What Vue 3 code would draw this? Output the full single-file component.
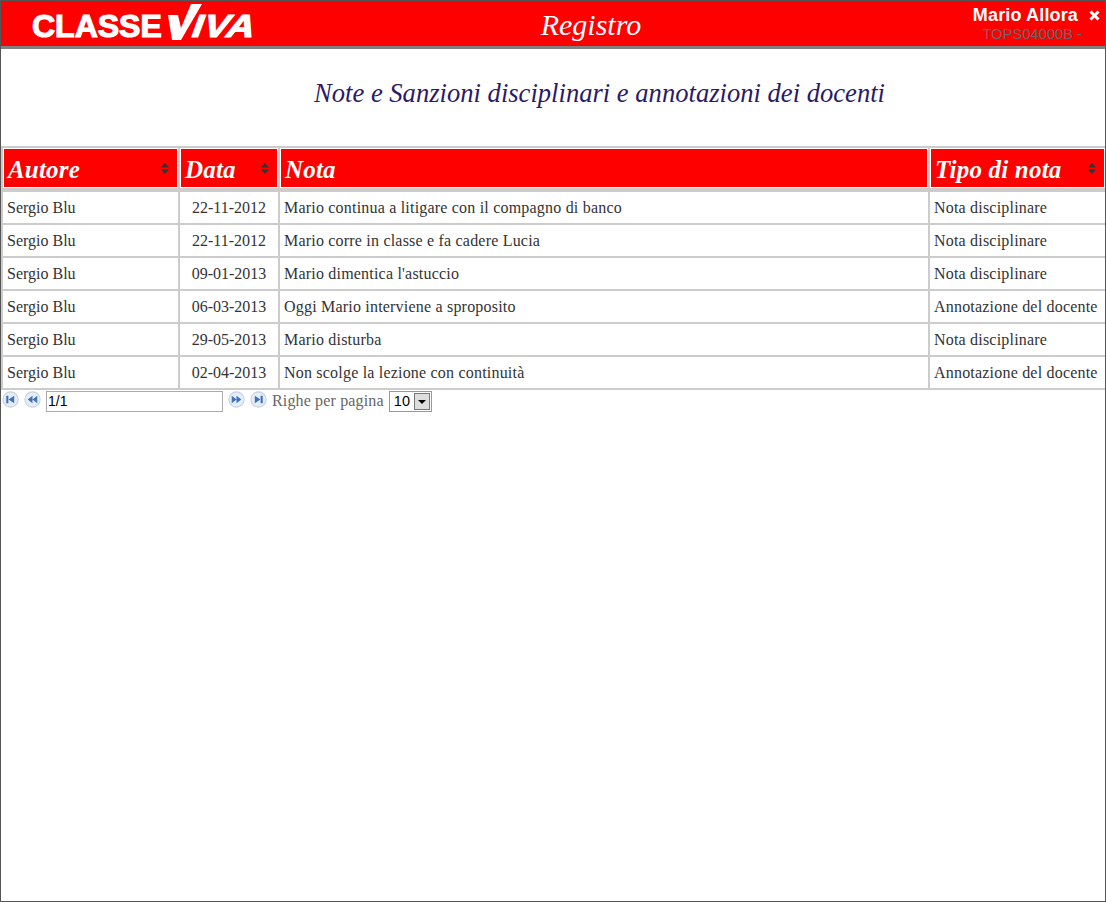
<template>
  <div class="page">
    <header class="topbar">
      <div class="logo">
        <span class="logo-text">CLASSE</span>
        <svg class="logo-v" width="40" height="36" viewBox="0 0 40 36">
          <path d="M6 11 H16 L19 24 L29 0 H40 L19 36 H10 Z" fill="#fff" />
        </svg>
        <span class="logo-text logo-iva">IVA</span>
      </div>
      <div class="title">Registro</div>
      <div class="user">
        <div class="user-name">
          <span>Mario Allora</span>
          <svg class="close" width="11" height="11" viewBox="0 0 11 11">
            <path d="M1.5 1.5 L9.5 9.5 M9.5 1.5 L1.5 9.5" stroke="#fff" stroke-width="3" />
          </svg>
        </div>
        <div class="user-code">TOPS04000B -</div>
      </div>
    </header>

    <h1 class="heading">Note e Sanzioni disciplinari e annotazioni dei docenti</h1>

    <table class="grid">
      <colgroup>
        <col v-for="c in columns" :key="c.label" :style="{ width: c.width + 'px' }" />
      </colgroup>
      <thead>
        <tr>
          <th v-for="c in columns" :key="c.label">
            <div class="th-inner">
              <span>{{ c.label }}</span>
              <svg v-if="c.sortable" class="sort" width="8" height="11" viewBox="0 0 8 11">
                <path d="M4 0 L8 4.5 H0 Z M0 6.5 H8 L4 11 Z" fill="#333" />
              </svg>
            </div>
          </th>
        </tr>
      </thead>
      <tbody>
        <tr v-for="(r, i) in rows" :key="i">
          <td class="author">{{ r.autore }}</td>
          <td class="center">{{ r.data }}</td>
          <td>{{ r.nota }}</td>
          <td>{{ r.tipo }}</td>
        </tr>
      </tbody>
    </table>

    <div class="pager">
      <button v-for="b in ['first', 'prev']" :key="b" class="pg-btn">
        <svg width="17" height="17" viewBox="0 0 16 16">
          <circle cx="8" cy="8" r="7.2" fill="#e6edf8" stroke="#c3d1e7" />
          <path :d="icons[b]" fill="#3f72bb" />
        </svg>
      </button>
      <input class="pg-input" value="1/1" />
      <button v-for="b in ['next', 'last']" :key="b" class="pg-btn">
        <svg width="17" height="17" viewBox="0 0 16 16">
          <circle cx="8" cy="8" r="7.2" fill="#e6edf8" stroke="#c3d1e7" />
          <path :d="icons[b]" fill="#3f72bb" />
        </svg>
      </button>
      <span class="pg-label">Righe per pagina</span>
      <div class="pg-select">
        <span>10</span>
        <span class="pg-arrow"></span>
      </div>
    </div>
  </div>
</template>

<script setup>
const columns = [
  { label: 'Autore', width: 177, sortable: true },
  { label: 'Data', width: 100, sortable: true },
  { label: 'Nota', width: 650, sortable: false },
  { label: 'Tipo di nota', width: 177, sortable: true }
]

const rows = [
  { autore: 'Sergio Blu', data: '22-11-2012', nota: 'Mario continua a litigare con il compagno di banco', tipo: 'Nota disciplinare' },
  { autore: 'Sergio Blu', data: '22-11-2012', nota: 'Mario corre in classe e fa cadere Lucia', tipo: 'Nota disciplinare' },
  { autore: 'Sergio Blu', data: '09-01-2013', nota: "Mario dimentica l'astuccio", tipo: 'Nota disciplinare' },
  { autore: 'Sergio Blu', data: '06-03-2013', nota: 'Oggi Mario interviene a sproposito', tipo: 'Annotazione del docente' },
  { autore: 'Sergio Blu', data: '29-05-2013', nota: 'Mario disturba', tipo: 'Nota disciplinare' },
  { autore: 'Sergio Blu', data: '02-04-2013', nota: 'Non scolge la lezione con continuità', tipo: 'Annotazione del docente' }
]

const icons = {
  first: 'M4 4.5 H6 V11.5 H4 Z M6.2 8 L11.5 4.5 V11.5 Z',
  prev: 'M3.5 8 L8 4.5 V11.5 Z M8 8 L12.5 4.5 V11.5 Z',
  next: 'M3.5 4.5 L8 8 L3.5 11.5 Z M8 4.5 L12.5 8 L8 11.5 Z',
  last: 'M4.5 4.5 L9.8 8 L4.5 11.5 Z M10 4.5 H12 V11.5 H10 Z'
}
</script>

<style>
html, body {
  margin: 0;
  background: #fff;
}
</style>

<style scoped>
.page {
  box-sizing: border-box;
  width: 1106px;
  height: 902px;
  border: 1px solid #555;
  overflow: hidden;
  font-family: "Liberation Serif", serif;
  color: #333;
}

.topbar {
  box-sizing: border-box;
  height: 48px;
  background: #f00;
  border-bottom: 3px solid #808080;
  display: grid;
  grid-template-columns: 400px 380px 1fr;
  align-items: start;
}

.logo {
  display: flex;
  align-items: flex-end;
  height: 40px;
  padding-left: 31px;
  color: #fff;
}

.logo-text {
  font-family: "Liberation Sans", sans-serif;
  font-weight: 700;
  font-size: 32px;
  line-height: 30px;
  -webkit-text-stroke: 1.2px #fff;
}

.logo-v {
  flex: none;
  margin-bottom: 1px;
}

.logo-iva {
  display: inline-block;
  margin-left: -14px;
  letter-spacing: 0.5px;
  transform: skewX(-20deg) scaleX(1.2);
  transform-origin: left bottom;
}

.title {
  text-align: center;
  font-style: italic;
  font-size: 30px;
  line-height: 48px;
  color: #fff;
}

.user {
  text-align: right;
  padding: 4px 5px 0 0;
  font-family: "Liberation Sans", sans-serif;
}

.user-name {
  display: flex;
  justify-content: flex-end;
  align-items: center;
  gap: 11px;
  color: #fff;
  font-weight: 700;
  font-size: 18px;
  letter-spacing: 0.15px;
  line-height: 20px;
}

.user-code {
  padding: 1px 18px 0 0;
  font-size: 14.7px;
  line-height: 17px;
  color: #666;
}

.heading {
  margin: 0;
  height: 96px;
  padding: 27px 0 0 313px;
  box-sizing: border-box;
  font-weight: 400;
  font-style: italic;
  font-size: 26.6px;
  line-height: 34px;
  color: #2b1a66;
}

.grid {
  table-layout: fixed;
  border-collapse: collapse;
  width: 1104px;
  border: 2px solid #ccc;
  border-left-width: 1px;
  border-right-width: 0;
  margin: 1px 0 0;
}

.grid th {
  padding: 0;
  border: 2px solid #ccc;
  border-bottom-width: 4px;
  background: #f00;
  height: 40px;
  box-shadow: inset 0 0 0 1px #fff;
  text-align: left;
  color: #fff;
  font-style: italic;
  font-size: 25px;
  letter-spacing: 0.2px;
}

.th-inner {
  display: flex;
  justify-content: space-between;
  align-items: center;
  padding: 3px 9px 0 5px;
}

.sort {
  margin-top: -2px;
}

.grid td {
  padding: 0 4px;
  height: 31px;
  border: 2px solid #ccc;
  font-size: 16px;
  letter-spacing: 0.2px;
  color: #333;
  white-space: nowrap;
}

.grid td.author {
  letter-spacing: 0;
}

.grid td.center {
  text-align: center;
  letter-spacing: 0;
}

.pager {
  display: flex;
  align-items: center;
  gap: 5px;
  height: 22px;
  padding-left: 1px;
  font-size: 16px;
  letter-spacing: 0.15px;
  color: #666;
}

.pg-btn {
  border: 0;
  padding: 0;
  background: none;
  display: flex;
  margin-top: -4px;
}

.pg-input {
  box-sizing: border-box;
  width: 177px;
  height: 21px;
  border: 1px solid #aaa;
  padding: 0 1px;
  font-family: "Liberation Sans", sans-serif;
  font-size: 14px;
  color: #000;
}

.pg-select {
  box-sizing: border-box;
  display: flex;
  justify-content: space-between;
  align-items: center;
  width: 43px;
  height: 21px;
  border: 1px solid #999;
  padding: 0 1px 0 4px;
  font-family: "Liberation Sans", sans-serif;
  font-size: 14.5px;
  color: #000;
}

.pg-arrow {
  width: 16px;
  height: 17px;
  box-sizing: border-box;
  background: #ddd;
  border: 1px solid #777;
  position: relative;
}

.pg-arrow::after {
  content: '';
  position: absolute;
  left: 3px;
  top: 6px;
  border-left: 4px solid transparent;
  border-right: 4px solid transparent;
  border-top: 4px solid #000;
}
</style>
